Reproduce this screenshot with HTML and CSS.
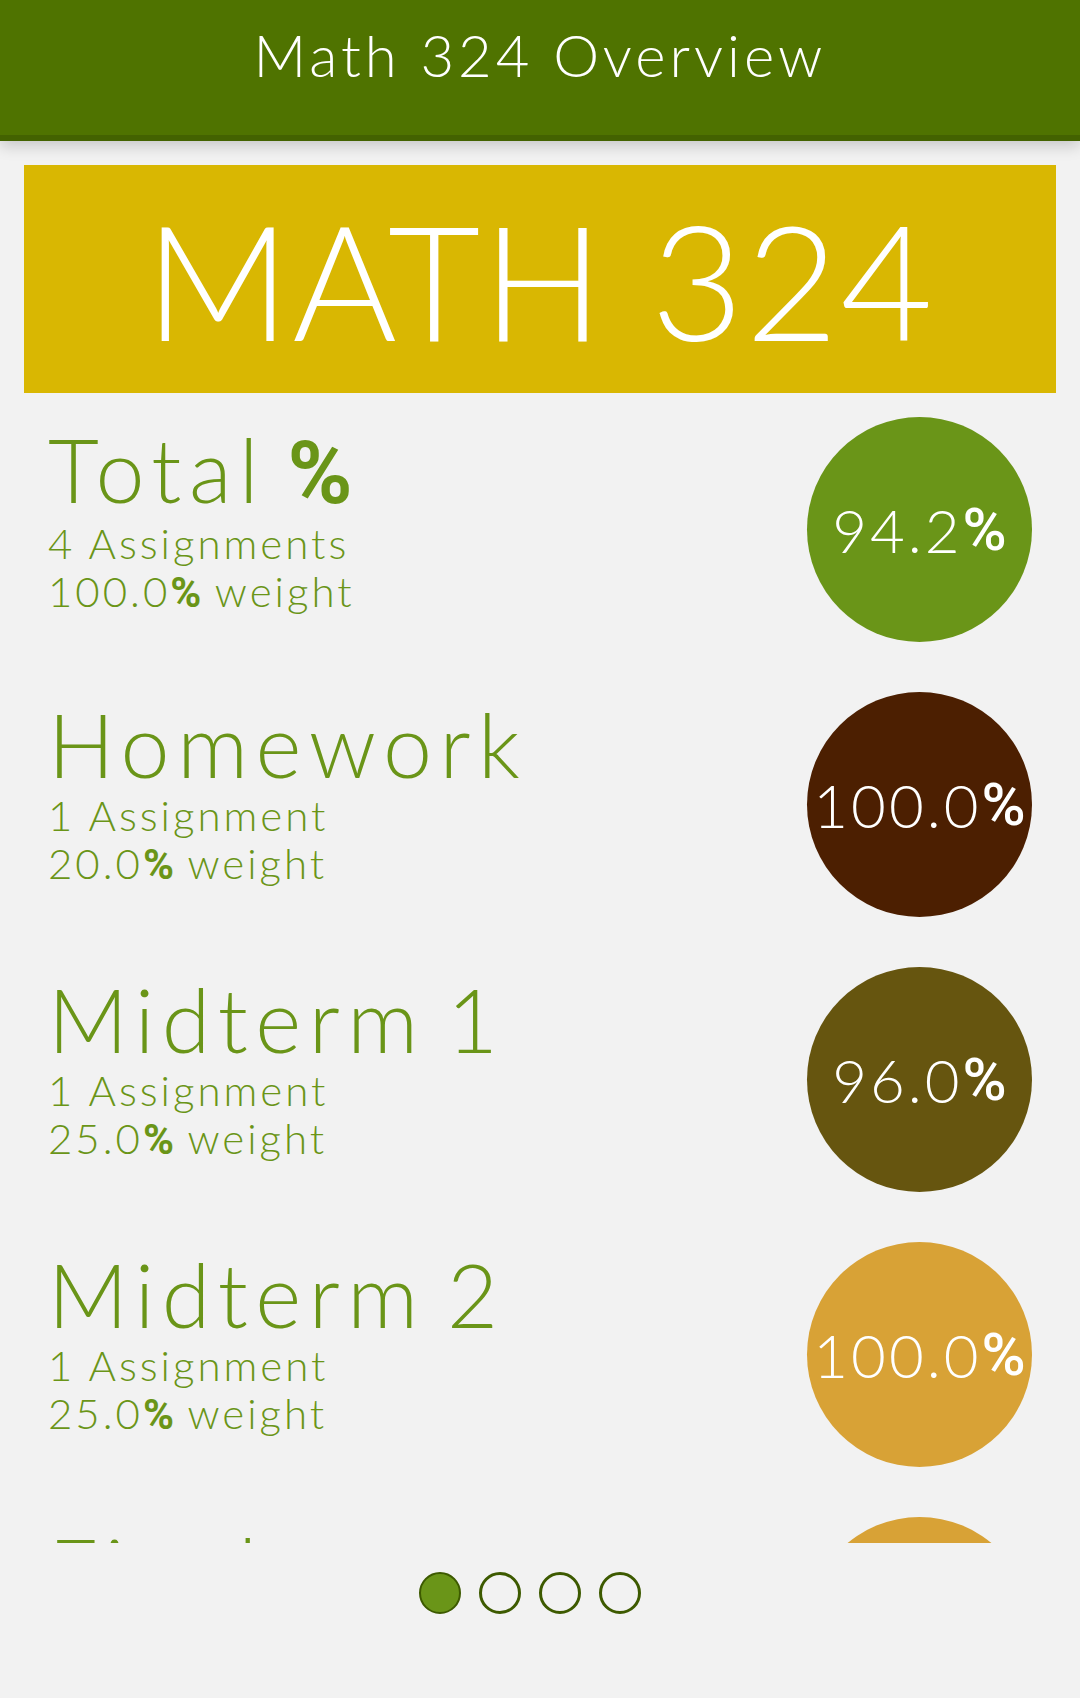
FILE: index.html
```html
<!DOCTYPE html>
<html lang="en">
<head>
<meta charset="utf-8">
<title>Math 324 Overview</title>
<link rel="stylesheet" href="styles.css">
</head>
<body>
<header class="appbar">
  <h1 class="appbar-title">Math 324 Overview</h1>
</header>
<main class="content">
  <section class="course-card">
    <span class="course-name">MATH 324</span>
  </section>

  <div class="category-list">
    <div class="category">
      <div class="category-info">
        <div class="category-name">Total <span class="pct pct-title">%</span></div>
        <div class="category-meta">4 Assignments</div>
        <div class="category-meta">100.0<span class="pct pct-meta">%</span> weight</div>
      </div>
      <div class="grade-circle grade-total">94.2<span class="pct pct-grade">%</span></div>
    </div>

    <div class="category">
      <div class="category-info">
        <div class="category-name">Homework</div>
        <div class="category-meta">1 Assignment</div>
        <div class="category-meta">20.0<span class="pct pct-meta">%</span> weight</div>
      </div>
      <div class="grade-circle grade-homework">100.0<span class="pct pct-grade">%</span></div>
    </div>

    <div class="category">
      <div class="category-info">
        <div class="category-name">Midterm 1</div>
        <div class="category-meta">1 Assignment</div>
        <div class="category-meta">25.0<span class="pct pct-meta">%</span> weight</div>
      </div>
      <div class="grade-circle grade-midterm1">96.0<span class="pct pct-grade">%</span></div>
    </div>

    <div class="category">
      <div class="category-info">
        <div class="category-name">Midterm 2</div>
        <div class="category-meta">1 Assignment</div>
        <div class="category-meta">25.0<span class="pct pct-meta">%</span> weight</div>
      </div>
      <div class="grade-circle grade-midterm2">100.0<span class="pct pct-grade">%</span></div>
    </div>

    <div class="category">
      <div class="category-info">
        <div class="category-name">Final</div>
        <div class="category-meta">1 Assignment</div>
        <div class="category-meta">30.0<span class="pct pct-meta">%</span> weight</div>
      </div>
      <div class="grade-circle grade-final">100.0<span class="pct pct-grade">%</span></div>
    </div>
  </div>

  <nav class="pager">
    <span class="pager-dot is-active"></span>
    <span class="pager-dot"></span>
    <span class="pager-dot"></span>
    <span class="pager-dot"></span>
  </nav>
</main>
</body>
</html>
```
FILE: styles.css
```css
* { box-sizing: border-box; }

html, body {
  margin: 0;
  padding: 0;
  background: #f2f2f2;
}

body {
  font-family: Lato, "Noto Sans", sans-serif;
  font-weight: 300;
  width: 1080px;
  height: 1698px;
  overflow: hidden;
}

/* ---------- App bar ---------- */
.appbar {
  height: 141px;
  background: #4f7300;
  border-bottom: 6px solid #436200;
  box-shadow: 0 5px 14px rgba(0, 0, 0, 0.18);
  position: relative;
  z-index: 2;
}

.appbar-title {
  margin: 0;
  padding-top: 20px;
  text-align: center;
  color: #ffffff;
  font-size: 58px;
  font-weight: 300;
  line-height: 70px;
  letter-spacing: 4px;
}

/* ---------- Content ---------- */
.content {
  padding: 24px 24px 0;
}

.course-card {
  height: 228px;
  background: #d9b702;
  display: flex;
  align-items: center;
  justify-content: center;
}

.course-name {
  color: #ffffff;
  font-size: 160px;
  line-height: 1;
  letter-spacing: 2px;
}

/* ---------- Category list ---------- */
.category-list {
  height: 1150px;
  overflow: hidden;
  padding: 24px 24px 0;
}

.category {
  display: flex;
  justify-content: space-between;
  align-items: flex-start;
  height: 275px;
}

.category-info {
  color: #6a9518;
  padding-top: 6px;
}

.category-name {
  font-size: 88px;
  line-height: 93px;
  letter-spacing: 7.5px;
  word-spacing: -10px;
  white-space: nowrap;
}

.category-meta {
  font-size: 42px;
  line-height: 48px;
  letter-spacing: 3px;
  white-space: nowrap;
}

.pct {
  font-family: Roboto, "Noto Sans", sans-serif;
  letter-spacing: 0;
}

.pct-title { font-weight: 700; }
.pct-meta { font-weight: 700; }
.pct-grade { font-weight: 500; }

.grade-circle {
  flex: 0 0 225px;
  width: 225px;
  height: 225px;
  border-radius: 50%;
  display: flex;
  align-items: center;
  justify-content: center;
  color: #ffffff;
  font-size: 60px;
  line-height: 1;
  letter-spacing: 3px;
  white-space: nowrap;
}

.grade-total { background: #6a9518; }
.grade-homework { background: #4c1f01; }
.grade-midterm1 { background: #66550f; }
.grade-midterm2 { background: #d8a236; }
.grade-final { background: #d8a236; }

/* ---------- Pager ---------- */
.pager {
  display: flex;
  justify-content: center;
  gap: 18px;
  padding: 29px 20px 0 0;
}

.pager-dot {
  width: 42px;
  height: 42px;
  border-radius: 50%;
  border: 3px solid #3d5a00;
}

.pager-dot.is-active {
  background: #6a9518;
  border-width: 2px;
}
```
